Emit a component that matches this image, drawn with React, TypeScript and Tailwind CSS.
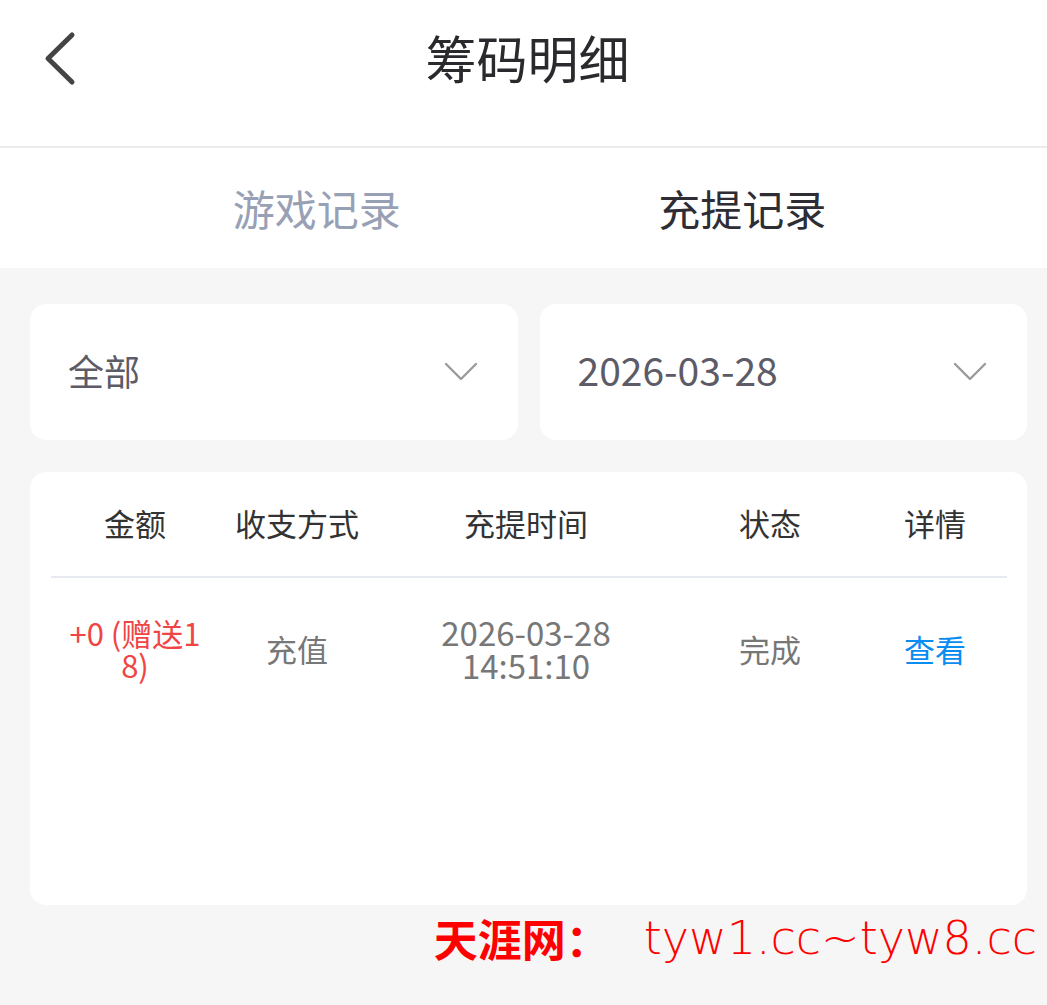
const cjk = "font-['Noto_Sans_CJK_SC','Noto_Sans',sans-serif]"

const columns = ['金额', '收支方式', '充提时间', '状态', '详情']
const gridCols = 'grid grid-cols-[168px_156px_302px_186px_144px]'

function Chevron() {
  return (
    <svg viewBox="0 0 34 22" className="h-[22px] w-[34px]" fill="none">
      <path d="M2 3 L17 18 L32 3" stroke="#9a9a9f" strokeWidth="2.4" strokeLinecap="round" strokeLinejoin="round" />
    </svg>
  )
}

function Select({ label, className }: { label: string; className: string }) {
  return (
    <div className="flex h-[136px] flex-1 items-center justify-between rounded-[16px] bg-white pl-[38px] pr-[40px]">
      <span className={`mb-[5px] leading-none text-[#5c5b66] ${className}`}>{label}</span>
      <Chevron />
    </div>
  )
}

export default function App() {
  return (
    <div className={`${cjk} min-h-[1005px] w-[1047px] bg-[#f6f6f6]`}>
      <header className="relative flex h-[148px] items-center justify-center border-b-2 border-[#ececec] bg-white">
        <button type="button" className="absolute left-[40px] top-[30px] h-[58px] w-[40px]" aria-label="返回">
          <svg viewBox="0 0 40 58" className="h-full w-full" fill="none">
            <path d="M32 5 L8 28.5 L32 52" stroke="#444" strokeWidth="5" strokeLinecap="round" strokeLinejoin="round" />
          </svg>
        </button>
        <h1 className="-mt-[32px] ml-[8px] text-[51px] font-normal leading-none text-[#2a2a2e]">筹码明细</h1>
      </header>

      <nav className="grid h-[120px] grid-cols-2 items-center bg-white">
        <div className="flex justify-center pl-[110px]">
          <span className="text-[42px] leading-none text-[#98a0b5]">游戏记录</span>
        </div>
        <div className="flex justify-center pr-[86px]">
          <span className="text-[42px] leading-none text-[#2d2d33]">充提记录</span>
        </div>
      </nav>

      <div className="flex gap-[22px] pl-[30px] pr-[20px] pt-[36px]">
        <Select label="全部" className="text-[36px]" />
        <Select label="2026-03-28" className="text-[39px]" />
      </div>

      <div className="ml-[30px] mr-[20px] mt-[32px] h-[433px] rounded-[16px] bg-white pl-[21px] pr-[20px]">
        <div className={`${gridCols} h-[106px] items-center border-b-2 border-[#e8eaf2] pb-[4px]`}>
          {columns.map((c) => (
            <span key={c} className="text-center text-[31px] leading-none text-[#333]">
              {c}
            </span>
          ))}
        </div>
        <div className={`${gridCols} items-center pt-[38px] text-[31px] leading-[32px] text-[#777]`}>
          <span className="break-all px-[16px] text-center text-[#f04545]">+0 (赠送18)</span>
          <span className="text-center">充值</span>
          <div className="flex flex-col items-center text-[33px] leading-[33px]">
            <span>2026-03-28</span>
            <span>14:51:10</span>
          </div>
          <span className="text-center">完成</span>
          <span className="text-center text-[#0a8cf0]">查看</span>
        </div>
      </div>

      <div className="flex items-center justify-end pr-[10px] pt-[10px]">
        <span className="text-[44px] font-bold leading-none text-[#ff0000]">天涯网</span>
        <span className="mr-[34px] text-[44px] font-bold leading-none text-[#ff0000]">：</span>
        <span className="font-['DejaVu_Sans',sans-serif] text-[46px] font-light leading-none text-[#ff0000]">
          tyw1.cc~tyw8.cc
        </span>
      </div>
    </div>
  )
}
